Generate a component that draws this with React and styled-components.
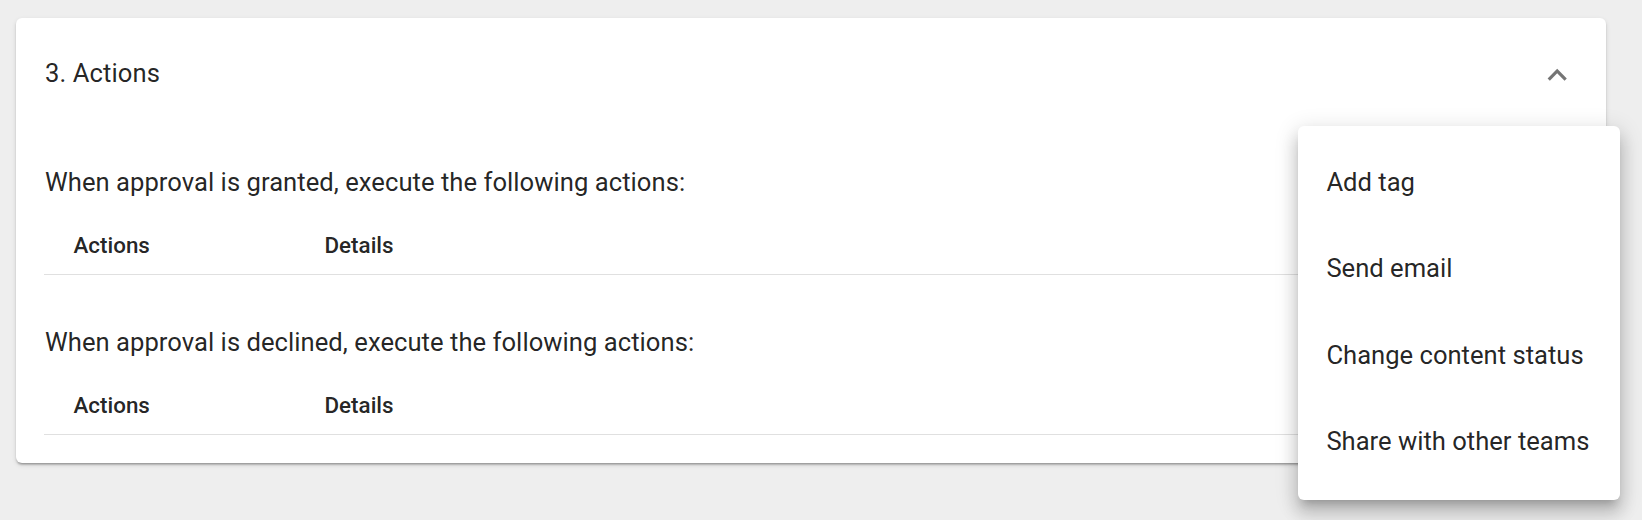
import React, { useState } from 'react';
import styled, { createGlobalStyle } from 'styled-components';

const sections = [
  { id: 'granted', label: 'When approval is granted, execute the following actions:' },
  { id: 'declined', label: 'When approval is declined, execute the following actions:' },
];

const menuItems = ['Add tag', 'Send email', 'Change content status', 'Share with other teams'];

const ChevronUp = () => (
  <svg width="38.4" height="38.4" viewBox="0 0 24 24" fill="currentColor">
    <path d="M12 8l-6 6 1.41 1.41L12 10.83l4.59 4.58L18 14z" />
  </svg>
);

const App = () => {
  const [expanded, setExpanded] = useState(true);

  return (
    <Page>
      <GlobalStyle />
      <Card>
        <Summary onClick={() => setExpanded(!expanded)}>
          <Title>3. Actions</Title>
          <ExpandIcon>
            <ChevronUp />
          </ExpandIcon>
        </Summary>
        {expanded && (
          <Details>
            {sections.map((section) => (
              <Section key={section.id}>
                <Lead>{section.label}</Lead>
                <HeadRow>
                  <HeadCell>Actions</HeadCell>
                  <HeadCell>Details</HeadCell>
                </HeadRow>
              </Section>
            ))}
          </Details>
        )}
      </Card>
      <Menu>
        {menuItems.map((item) => (
          <MenuItem key={item}>{item}</MenuItem>
        ))}
      </Menu>
    </Page>
  );
};

export default App;

const GlobalStyle = createGlobalStyle`
  html, body {
    margin: 0;
    padding: 0;
    background: #eeeeee;
    font-family: Roboto, "Liberation Sans", sans-serif;
    color: rgba(0, 0, 0, 0.87);
  }
`;

const Page = styled.div`
  position: relative;
  height: 520px;
  padding: 18px 36px 0 16px;
  box-sizing: border-box;
`;

const Card = styled.div`
  background: #fff;
  border-radius: 6px;
  box-shadow: 0 3px 2px -2px rgba(0, 0, 0, 0.2), 0 2px 2px 0 rgba(0, 0, 0, 0.14),
    0 2px 5px 0 rgba(0, 0, 0, 0.12);
`;

const Summary = styled.div`
  display: flex;
  align-items: center;
  justify-content: space-between;
  height: 110.4px;
  padding: 0 30px 0 29px;
  cursor: pointer;
`;

const Title = styled.div`
  font-size: 25.6px;
  line-height: 38.4px;
  letter-spacing: 0.1px;
`;

const ExpandIcon = styled.div`
  display: flex;
  margin-top: 3px;
  color: rgba(0, 0, 0, 0.54);
`;

const Details = styled.div`
  display: flex;
  flex-direction: column;
  gap: 47.8px;
  padding: 34.6px 28px 28px;
`;

const Section = styled.div`
  display: flex;
  flex-direction: column;
`;

const Lead = styled.p`
  margin: 0 0 14.6px 1px;
  font-size: 25.6px;
  line-height: 38.4px;
  letter-spacing: 0.04px;
`;

const HeadRow = styled.div`
  display: grid;
  grid-template-columns: 251px 1fr;
  height: 58px;
  align-items: center;
  border-bottom: 1px solid #e0e0e0;
`;

const HeadCell = styled.div`
  padding-left: 29.5px;
  font-size: 22.4px;
  font-weight: 500;
  line-height: 38.4px;
`;

const Menu = styled.ul`
  position: absolute;
  left: 1298px;
  top: 126px;
  width: 322px;
  margin: 0;
  padding: 12.8px 0 16px;
  list-style: none;
  background: #fff;
  border-radius: 6px;
  box-shadow: 0 8px 8px -5px rgba(0, 0, 0, 0.2), 0 13px 16px 2px rgba(0, 0, 0, 0.14),
    0 5px 22px 3px rgba(0, 0, 0, 0.12);
`;

const MenuItem = styled.li`
  display: flex;
  align-items: center;
  height: 86.4px;
  padding: 0 25.6px 0 28.4px;
  font-size: 25.6px;
  white-space: nowrap;
  cursor: pointer;
`;
